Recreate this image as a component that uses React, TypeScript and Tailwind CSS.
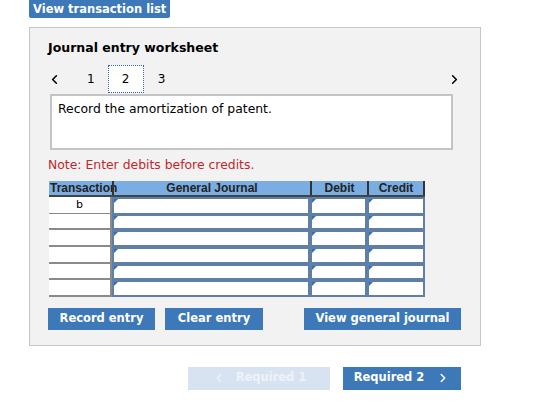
import { ChevronLeft, ChevronRight } from "lucide-react";

const font = { fontFamily: '"DejaVu Sans", Verdana, sans-serif' };

function InputCell() {
  return (
    <div className="relative h-full bg-white border-2 border-[#5f7fa6]">
      <span className="absolute left-0 top-0 h-0 w-0 border-t-[4px] border-r-[4px] border-t-[#2f6fc0] border-r-transparent" />
    </div>
  );
}

function JournalRow({ label, height }: { label?: string; height: number }) {
  return (
    <div className="grid grid-cols-[63px_198px_57px_58px]" style={{ height }}>
      <div className="flex items-center justify-center border-b-2 border-r-2 border-[#8a8a8a] bg-white text-[11px] text-black">
        {label}
      </div>
      <InputCell />
      <InputCell />
      <InputCell />
    </div>
  );
}

export default function App() {
  const rows = [
    { label: "b", height: 17 },
    { label: "", height: 16 },
    { label: "", height: 17 },
    { label: "", height: 17 },
    { label: "", height: 16 },
    { label: "", height: 17 },
  ];
  return (
    <div className="h-[420px] w-[560px] bg-white" style={font}>
      <div className="flex pl-[29px]">
        <button className="h-[18px] rounded-b-[2px] bg-[#3d78b9] px-[4px] text-[11.5px] font-bold leading-[18px] text-white">
          View transaction list
        </button>
      </div>

      <div className="ml-[29px] mt-[9px] w-[452px] border border-[#c6c6c6] bg-[#f2f2f2] px-[18px] pb-[15px] pt-[12px]">
        <h2 className="text-[12.5px] font-bold leading-[16px] text-black">Journal entry worksheet</h2>

        <div className="mt-[9px] flex h-[28px] items-center text-[12px] text-black">
          <ChevronLeft className="ml-[-1px] h-[15px] w-[15px]" strokeWidth={2.5} />
          <span className="ml-[25px]">1</span>
          <span className="ml-[13px] flex h-[28px] w-[36px] items-center justify-center border border-dotted border-[#2d64b8] bg-white">
            2
          </span>
          <span className="ml-[14px]">3</span>
          <ChevronRight className="ml-auto mr-0 h-[15px] w-[15px]" strokeWidth={2.5} />
        </div>

        <div className="ml-[2px] mt-[1px] h-[56px] w-[403px] border-2 border-[#c4c4c4] bg-white px-[6px] pt-[4px] text-[12.4px] text-black">
          Record the amortization of patent.
        </div>

        <p className="mt-[6px] text-[12.4px] text-[#c1272d]">Note: Enter debits before credits.</p>

        <div className="ml-[1px] mt-[6px] w-[376px]">
          <div
            className="grid h-[16px] grid-cols-[63px_198px_57px_58px] border-b-2 border-[#444] bg-[#7aaee2] text-[12px] font-bold leading-[14px] text-[#222]"
            style={{ fontFamily: '"Liberation Sans", Arial, sans-serif' }}
          >
            <div className="overflow-visible whitespace-nowrap pl-[1px]">Transaction</div>
            <div className="border-l-2 border-[#333] text-center">General Journal</div>
            <div className="border-l-2 border-[#333] text-center">Debit</div>
            <div className="border-x-2 border-[#333] text-center">Credit</div>
          </div>
          {rows.map((r, i) => (
            <JournalRow key={i} label={r.label} height={r.height} />
          ))}
        </div>

        <div className="mt-[11px] flex items-center">
          <button className="h-[22px] w-[107px] bg-[#3d78b9] text-[11.5px] font-bold text-white">Record entry</button>
          <button className="ml-[10px] h-[22px] w-[98px] bg-[#3d78b9] text-[11.5px] font-bold text-white">Clear entry</button>
          <button className="ml-auto mr-[1px] h-[22px] w-[157px] bg-[#3d78b9] text-[11.5px] font-bold text-white">
            View general journal
          </button>
        </div>
      </div>

      <div className="mt-[21px] flex pl-[188px]">
        <button className="flex h-[23px] w-[142px] items-center justify-center gap-[10px] bg-[#d7e3f1] text-[11.5px] font-bold text-[#eef3f9]">
          <ChevronLeft className="h-[14px] w-[14px]" strokeWidth={2.5} />
          Required 1
        </button>
        <button className="ml-[13px] flex h-[23px] w-[118px] items-center justify-center gap-[12px] bg-[#3d78b9] text-[11.5px] font-bold text-white">
          Required 2
          <ChevronRight className="h-[14px] w-[14px]" strokeWidth={2.5} />
        </button>
      </div>
    </div>
  );
}
